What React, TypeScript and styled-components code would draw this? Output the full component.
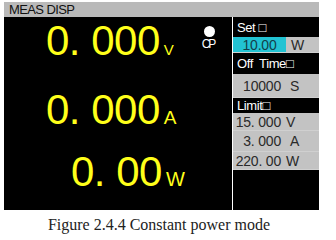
import React from "react";
import styled, { createGlobalStyle } from "styled-components";

const GlobalStyle = createGlobalStyle`
  html, body {
    margin: 0;
    padding: 0;
    background: #ffffff;
  }
`;

const Page = styled.div`
  width: 336px;
  height: 240px;
  padding: 2px 0 0 4px;
  box-sizing: border-box;
  display: flex;
  flex-direction: column;
`;

const Screen = styled.div`
  width: 315px;
  height: 208px;
  background: #000;
  display: flex;
  flex-direction: column;
  font-family: "Liberation Sans", Arial, sans-serif;
`;

const TitleBar = styled.div`
  height: 15px;
  background: #b9b9b9;
  color: #111;
  font-size: 13px;
  line-height: 15px;
  padding-left: 5px;
  letter-spacing: -0.6px;
  white-space: pre;
`;

const Body = styled.div`
  flex: 1;
  display: flex;
`;

const MainArea = styled.div`
  width: 228px;
  display: flex;
  border-right: 1px solid #fff;
`;

const Readings = styled.div`
  flex: 1;
  display: flex;
  flex-direction: column;
  padding-top: 2px;
`;

const Reading = styled.div<{ indent: number; height: number }>`
  height: ${({ height }) => height}px;
  padding-left: ${({ indent }) => indent}px;
  display: flex;
  align-items: baseline;
  color: #ffff1a;
`;

const Value = styled.span`
  font-size: 42px;
  line-height: 44px;
  letter-spacing: -0.5px;
  white-space: pre;
`;

const Unit = styled.span<{ size: number }>`
  font-size: ${({ size }) => size}px;
  margin-left: 4px;
`;

const ModeIndicator = styled.div`
  width: 26px;
  margin-right: 10px;
  padding-top: 9px;
  display: flex;
  flex-direction: column;
  align-items: center;
`;

const Dot = styled.div`
  width: 11px;
  height: 11px;
  border-radius: 50%;
  background: #fff;
`;

const ModeText = styled.div`
  color: #fff;
  font-size: 12px;
  line-height: 12px;
  margin-top: 1px;
  letter-spacing: -2px;
  margin-left: -2px;
`;

const Panel = styled.div`
  flex: 1;
  display: flex;
  flex-direction: column;
`;

const Label = styled.div<{ height: number }>`
  height: ${({ height }) => height}px;
  color: #fff;
  font-size: 13px;
  display: flex;
  align-items: center;
  padding-left: 4px;
  letter-spacing: -0.4px;
  white-space: pre;
`;

const Field = styled.div<{ height: number }>`
  height: ${({ height }) => height}px;
  background: #c3c3c3;
  border-bottom: 1px solid #d0d0d0;
  box-sizing: border-box;
  display: flex;
  align-items: center;
  color: #2a2a2a;
  font-size: 14px;
`;

const Num = styled.span<{ selected?: boolean }>`
  width: ${({ selected }) => (selected ? "53px" : "48px")};
  height: 100%;
  display: flex;
  align-items: center;
  justify-content: ${({ selected }) => (selected ? "center" : "flex-end")};
  background: ${({ selected }) => (selected ? "#22c3d3" : "transparent")};
  color: ${({ selected }) => (selected ? "#14404a" : "inherit")};
  white-space: pre;
  letter-spacing: -0.2px;
`;

const FieldUnit = styled.span<{ gap: number }>`
  margin-left: ${({ gap }) => gap}px;
`;

const Caption = styled.div`
  margin-top: 6px;
  width: 310px;
  text-align: center;
  font-family: "Liberation Serif", "Times New Roman", serif;
  font-size: 16px;
  color: #222;
`;

export default function App() {
  return (
    <>
      <GlobalStyle />
      <Page>
        <Screen>
          <TitleBar>MEAS DISP</TitleBar>
          <Body>
            <MainArea>
              <Readings>
                <Reading indent={42} height={69}>
                  <Value>0. 000</Value>
                  <Unit size={15}>V</Unit>
                </Reading>
                <Reading indent={42} height={62}>
                  <Value>0. 000</Value>
                  <Unit size={19}>A</Unit>
                </Reading>
                <Reading indent={67} height={60}>
                  <Value>0. 00</Value>
                  <Unit size={20}>W</Unit>
                </Reading>
              </Readings>
              <ModeIndicator>
                <Dot />
                <ModeText>CP</ModeText>
              </ModeIndicator>
            </MainArea>
            <Panel>
              <Label height={20}>Set □</Label>
              <Field height={16}>
                <Num selected>10.00</Num>
                <FieldUnit gap={5}>W</FieldUnit>
              </Field>
              <Label height={21}>Off  Time□</Label>
              <Field height={24}>
                <Num>10000</Num>
                <FieldUnit gap={9}>S</FieldUnit>
              </Field>
              <Label height={15}>Limit□</Label>
              <Field height={18}>
                <Num>15. 000</Num>
                <FieldUnit gap={5}>V</FieldUnit>
              </Field>
              <Field height={21}>
                <Num>3. 000</Num>
                <FieldUnit gap={9}>A</FieldUnit>
              </Field>
              <Field height={18}>
                <Num>220. 00</Num>
                <FieldUnit gap={5}>W</FieldUnit>
              </Field>
            </Panel>
          </Body>
        </Screen>
        <Caption>Figure 2.4.4 Constant power mode</Caption>
      </Page>
    </>
  );
}
